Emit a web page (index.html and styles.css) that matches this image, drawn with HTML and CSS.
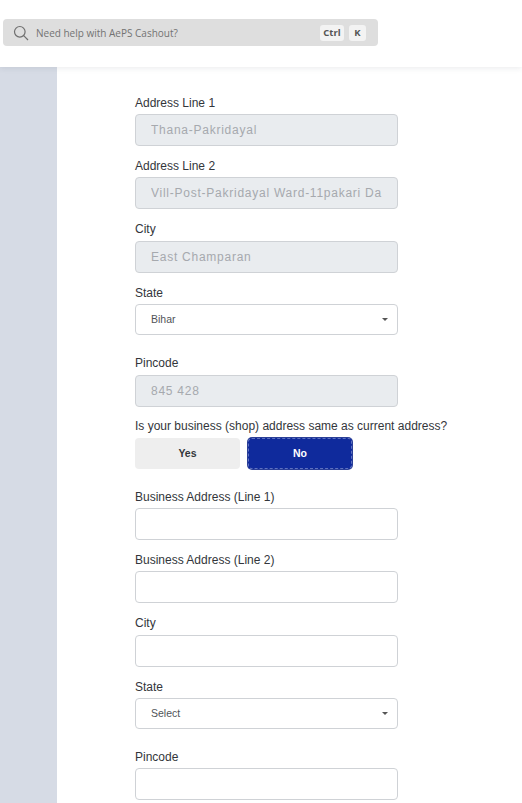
FILE: index.html
```html
<!DOCTYPE html>
<html lang="en">
  <head>
    <meta charset="UTF-8" />
    <meta name="viewport" content="width=device-width, initial-scale=1.0" />
    <title>AePS Cashout</title>
    <link rel="stylesheet" href="styles.css">
  </head>
  <body>
    <header class="topbar">
      <div class="search">
        <svg class="search-icon" width="16" height="16" viewBox="0 0 16 16" fill="none" stroke="#6f6f6f" stroke-width="1.2">
          <circle cx="6.8" cy="6.8" r="5.3" />
          <path d="M10.7 10.7L15 15" />
        </svg>
        <span class="search-text">Need help with AePS Cashout?</span>
        <kbd class="key key-ctrl">Ctrl</kbd>
        <kbd class="key key-k">K</kbd>
      </div>
    </header>
    <div class="page">
      <aside class="sidebar"></aside>
      <main class="content">
        <form class="form">
          <div class="field">
            <label class="label">Address Line 1</label>
            <input class="input" type="text" value="Thana-Pakridayal" disabled />
          </div>
          <div class="field">
            <label class="label">Address Line 2</label>
            <input class="input" type="text" value="Vill-Post-Pakridayal Ward-11pakari Darbar" disabled />
          </div>
          <div class="field">
            <label class="label">City</label>
            <input class="input" type="text" value="East Champaran" disabled />
          </div>
          <div class="field field-select">
            <label class="label">State</label>
            <div class="select"><span>Bihar</span><i class="caret"></i></div>
          </div>
          <div class="field field-tight">
            <label class="label">Pincode</label>
            <input class="input" type="text" value="845 428" disabled />
          </div>
          <div class="choice">
            <label class="label question">Is your business (shop) address same as current address?</label>
            <div class="choice-buttons">
              <button class="btn btn-yes" type="button">Yes</button>
              <button class="btn btn-no" type="button">No</button>
            </div>
          </div>
          <div class="field">
            <label class="label">Business Address (Line 1)</label>
            <input class="input" type="text" />
          </div>
          <div class="field">
            <label class="label">Business Address (Line 2)</label>
            <input class="input" type="text" />
          </div>
          <div class="field">
            <label class="label">City</label>
            <input class="input" type="text" />
          </div>
          <div class="field field-select">
            <label class="label">State</label>
            <div class="select"><span>Select</span><i class="caret"></i></div>
          </div>
          <div class="field">
            <label class="label">Pincode</label>
            <input class="input" type="text" />
          </div>
        </form>
      </main>
    </div>
  </body>
</html>
```

FILE: styles.css
```css
* {
  margin: 0;
  padding: 0;
  box-sizing: border-box;
}
html,
body {
  height: 803px;
  overflow: hidden;
}
body {
  font-family: "Liberation Sans", Arial, sans-serif;
  background: #fff;
  color: #2f3237;
}
.topbar {
  position: relative;
  z-index: 2;
  height: 67px;
  padding: 19px 0 0 3px;
  background: #fff;
  box-shadow: 0 1px 6px rgba(40, 50, 70, 0.1);
}
.search {
  display: flex;
  align-items: center;
  width: 375px;
  height: 27px;
  padding: 0 12px 0 10px;
  background: #dedede;
  border-radius: 4px;
}
.search-icon {
  flex: none;
  margin-right: 7px;
}
.search-text {
  flex: 1;
  font-family: "Open Sans", "Liberation Sans", sans-serif;
  font-size: 10px;
  color: #737373;
}
.key {
  height: 16px;
  font-family: "Open Sans", "Liberation Sans", sans-serif;
  font-size: 9.5px;
  font-weight: 700;
  line-height: 16px;
  text-align: center;
  color: #555;
  background: #f3f3f3;
  border-radius: 3px;
}
.key-ctrl {
  width: 24px;
}
.key-k {
  width: 17px;
  margin-left: 5px;
}
.page {
  display: flex;
  height: 736px;
}
.sidebar {
  width: 57px;
  background: #d6dbe5;
}
.content {
  flex: 1;
  padding: 26.7px 0 0 78px;
}
.form {
  width: 263px;
}
.field {
  margin-bottom: 11.03px;
}
.field-select {
  margin-bottom: 19px;
}
.field-tight {
  margin-bottom: 10px;
}
.field-tight .label {
  margin-bottom: 3px;
}
.label {
  display: block;
  height: 18px;
  margin-bottom: 2.3px;
  font-size: 12px;
  line-height: 18px;
  color: #33363b;
}
.input {
  display: block;
  width: 100%;
  height: 32px;
  padding: 0 15px;
  font-family: "Liberation Sans", Arial, sans-serif;
  font-size: 12px;
  letter-spacing: 0.75px;
  color: #33363b;
  background: #fff;
  border: 1px solid #cfd2d6;
  border-radius: 4px;
  outline: none;
}
.input:disabled {
  color: #a6a9ae;
  background: #e9ecef;
  opacity: 1;
}
.select {
  display: flex;
  align-items: center;
  justify-content: space-between;
  height: 31px;
  padding: 0 9px 0 15px;
  font-size: 10.5px;
  color: #505458;
  background: #fff;
  border: 1px solid #cfd2d6;
  border-radius: 4px;
}
.caret {
  width: 0;
  height: 0;
  border-left: 3.5px solid transparent;
  border-right: 3.5px solid transparent;
  border-top: 3.5px solid #555;
}
.choice {
  margin-bottom: 18.7px;
}
.question {
  white-space: nowrap;
}
.choice-buttons {
  display: flex;
  gap: 8px;
  margin-top: 3px;
}
.btn {
  height: 31px;
  font-family: "Liberation Sans", Arial, sans-serif;
  font-size: 10.5px;
  font-weight: 700;
  border-radius: 4px;
  border: 0;
}
.btn-yes {
  width: 105px;
  color: #33363b;
  background: #eeeeee;
}
.btn-no {
  width: 104px;
  color: #fff;
  background: #0f2a9c;
  border: 1px dashed #5f72c0;
  box-shadow: 0 0 0 1px #2b3f97;
}
```
